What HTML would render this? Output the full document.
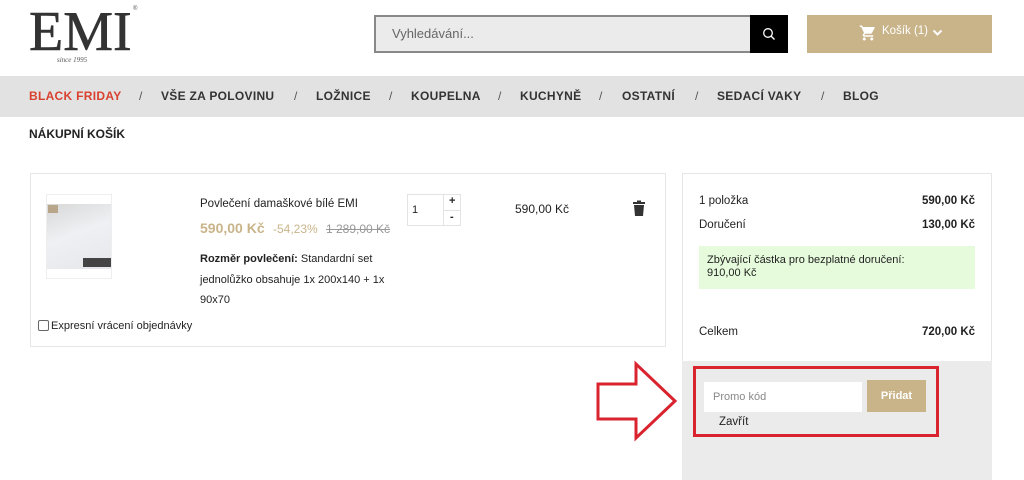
<!DOCTYPE html>
<html><head><meta charset="utf-8">
<style>
*{box-sizing:border-box;margin:0;padding:0}
body{width:1024px;height:480px;overflow:hidden;background:#fff;font-family:"Liberation Sans","DejaVu Sans",sans-serif;color:#222;position:relative}
.a{position:absolute}
.nav{top:76px;left:0;width:1024px;height:41px;background:#e2e2e2}
.nav span{position:absolute;top:13px;font-size:12px;font-weight:bold;color:#333;letter-spacing:.3px}
.nav i{position:absolute;top:13px;font-size:12px;color:#555;font-style:normal}
</style></head><body>
<div class="a" style="left:29px;top:3px;font-family:'Liberation Serif',serif;font-size:56px;color:#333;letter-spacing:0;line-height:58px;-webkit-text-stroke:0.6px #333">EMI</div>
<div class="a" style="left:133px;top:6px;font-size:6px;color:#555">®</div>
<div class="a" style="left:57px;top:56px;font-family:'Liberation Serif',serif;font-style:italic;font-size:7px;color:#555">since 1995</div>

<div class="a" style="left:374px;top:15px;width:377px;height:38px;background:#ebebeb;border:2px solid #888;border-right:none"></div>
<div class="a" style="left:392px;top:26px;font-size:13px;color:#666">Vyhledávání...</div>
<div class="a" style="left:750px;top:15px;width:38px;height:38px;background:#000"></div>
<svg class="a" style="left:762px;top:27px" width="14" height="14" viewBox="0 0 14 14"><circle cx="6" cy="6" r="4.3" fill="none" stroke="#fff" stroke-width="1.3"/><path d="M9 9l3.5 3.5" stroke="#fff" stroke-width="1.4"/></svg>

<div class="a" style="left:807px;top:15px;width:185px;height:38px;background:#c9b48a"></div>
<svg class="a" style="left:859px;top:24px" width="18" height="18" viewBox="0 0 24 24"><path fill="#fff" d="M7 18c-1.1 0-2 .9-2 2s.9 2 2 2 2-.9 2-2-.9-2-2-2zM1 2v2h2l3.6 7.6-1.4 2.4c-.1.3-.2.6-.2 1 0 1.1.9 2 2 2h12v-2H7.4c-.1 0-.2-.1-.2-.2v-.1l.9-1.7h7.4c.8 0 1.4-.4 1.7-1l3.6-6.5c.1-.2.2-.3.2-.5 0-.6-.5-1-1-1H5.2l-.9-2H1zm16 16c-1.1 0-2 .9-2 2s.9 2 2 2 2-.9 2-2-.9-2-2-2z"/></svg>
<div class="a" style="left:882px;top:25px;font-size:11.5px;color:#fff">Košík (1)</div>
<svg class="a" style="left:932px;top:29px" width="11" height="8" viewBox="0 0 11 8"><path d="M1.5 1.5l4 4 4-4" fill="none" stroke="#fff" stroke-width="2"/></svg>

<div class="a nav">
<span style="left:29px;color:#d9412f">BLACK FRIDAY</span><i style="left:139px">/</i>
<span style="left:161px">VŠE ZA POLOVINU</span><i style="left:294px">/</i>
<span style="left:316px">LOŽNICE</span><i style="left:389px">/</i>
<span style="left:411px">KOUPELNA</span><i style="left:498px">/</i>
<span style="left:520px">KUCHYNĚ</span><i style="left:599px">/</i>
<span style="left:622px">OSTATNÍ</span><i style="left:695px">/</i>
<span style="left:717px">SEDACÍ VAKY</span><i style="left:821px">/</i>
<span style="left:843px">BLOG</span>
</div>
<div class="a" style="left:29px;top:127px;font-size:12px;font-weight:bold;color:#222">NÁKUPNÍ KOŠÍK</div>

<div class="a" style="left:30px;top:173px;width:636px;height:174px;border:1px solid #e6e6e6"></div>
<div class="a" style="left:46px;top:194px;width:66px;height:85px;border:1px solid #eee;background:#fff">
<div style="position:absolute;left:0;top:9px;width:64px;height:65px;background:linear-gradient(160deg,#d8d8d8,#eef0f3 45%,#e6e7ea)"></div>
<div style="position:absolute;left:1px;top:10px;width:10px;height:8px;background:#b8a68a"></div>
<div style="position:absolute;left:36px;top:63px;width:28px;height:9px;background:#444"></div>
</div>
<div class="a" style="left:200px;top:198px;font-size:11.5px;color:#222">Povlečení damaškové bílé EMI</div>
<div class="a" style="left:200px;top:220px;font-size:14px;font-weight:bold;color:#c9b48a">590,00 Kč</div>
<div class="a" style="left:273px;top:222px;font-size:12px;color:#c9b48a">-54,23%</div>
<div class="a" style="left:326px;top:222px;font-size:12px;color:#999;text-decoration:line-through">1 289,00 Kč</div>
<div class="a" style="left:200px;top:249px;font-size:11px;color:#222;line-height:20.5px;width:200px"><b>Rozměr povlečení:</b> Standardní set jednolůžko obsahuje 1x 200x140 + 1x 90x70</div>
<div class="a" style="left:407px;top:194px;width:54px;height:32px;border:1px solid #e3e3e3"></div>
<div class="a" style="left:443px;top:194px;width:1px;height:32px;background:#e3e3e3"></div>
<div class="a" style="left:443px;top:210px;width:18px;height:1px;background:#e3e3e3"></div>
<div class="a" style="left:412px;top:204px;font-size:11px">1</div>
<div class="a" style="left:449px;top:195px;font-size:11px;font-weight:bold">+</div>
<div class="a" style="left:450px;top:211px;font-size:11px;font-weight:bold">-</div>
<div class="a" style="left:515px;top:202px;font-size:12px;color:#222">590,00 Kč</div>
<svg class="a" style="left:632px;top:200px" width="14" height="16" viewBox="0 0 14 16"><rect x="1" y="2" width="12" height="2" fill="#333"/><rect x="5" y="0.5" width="4" height="2" fill="#333"/><path d="M2 5h10l-1 11H3z" fill="#333"/></svg>
<div class="a" style="left:38px;top:320px;width:11px;height:11px;border:1px solid #666;border-radius:2px"></div>
<div class="a" style="left:51px;top:320px;font-size:11px;color:#222">Expresní vrácení objednávky</div>

<div class="a" style="left:682px;top:173px;width:310px;height:188px;border:1px solid #e6e6e6;border-bottom:none"></div>
<div class="a" style="left:682px;top:361px;width:310px;height:119px;background:#ebebeb"></div>
<div class="a" style="left:699px;top:195px;font-size:11.5px">1 položka</div>
<div class="a" style="left:922px;top:195px;font-size:11.5px;font-weight:bold">590,00 Kč</div>
<div class="a" style="left:699px;top:219px;font-size:11.5px">Doručení</div>
<div class="a" style="left:922px;top:219px;font-size:11.5px;font-weight:bold">130,00 Kč</div>
<div class="a" style="left:699px;top:246px;width:276px;height:43px;background:#e6fbdc;padding:8px 8px;font-size:11px;line-height:13px;color:#222">Zbývající částka pro bezplatné doručení:<br>910,00 Kč</div>
<div class="a" style="left:699px;top:326px;font-size:11.5px">Celkem</div>
<div class="a" style="left:922px;top:326px;font-size:11.5px;font-weight:bold">720,00 Kč</div>

<div class="a" style="left:704px;top:382px;width:158px;height:30px;background:#fff"></div>
<div class="a" style="left:713px;top:391px;font-size:11px;color:#888">Promo kód</div>
<div class="a" style="left:867px;top:380px;width:59px;height:32px;background:#c9b48a;color:#fff;font-size:11px;font-weight:bold;text-align:center;line-height:32px">Přidat</div>
<div class="a" style="left:719px;top:416px;font-size:11.5px;color:#222">Zavřít</div>
<div class="a" style="left:693px;top:366px;width:246px;height:71px;border:3px solid #d9232e"></div>
<svg class="a" style="left:0;top:0" width="1024" height="480"><polygon points="598,384 636,384 636,364 675,401 636,438 636,419 598,419" fill="none" stroke="#d9232e" stroke-width="3" stroke-linejoin="miter"/></svg>
</body></html>
